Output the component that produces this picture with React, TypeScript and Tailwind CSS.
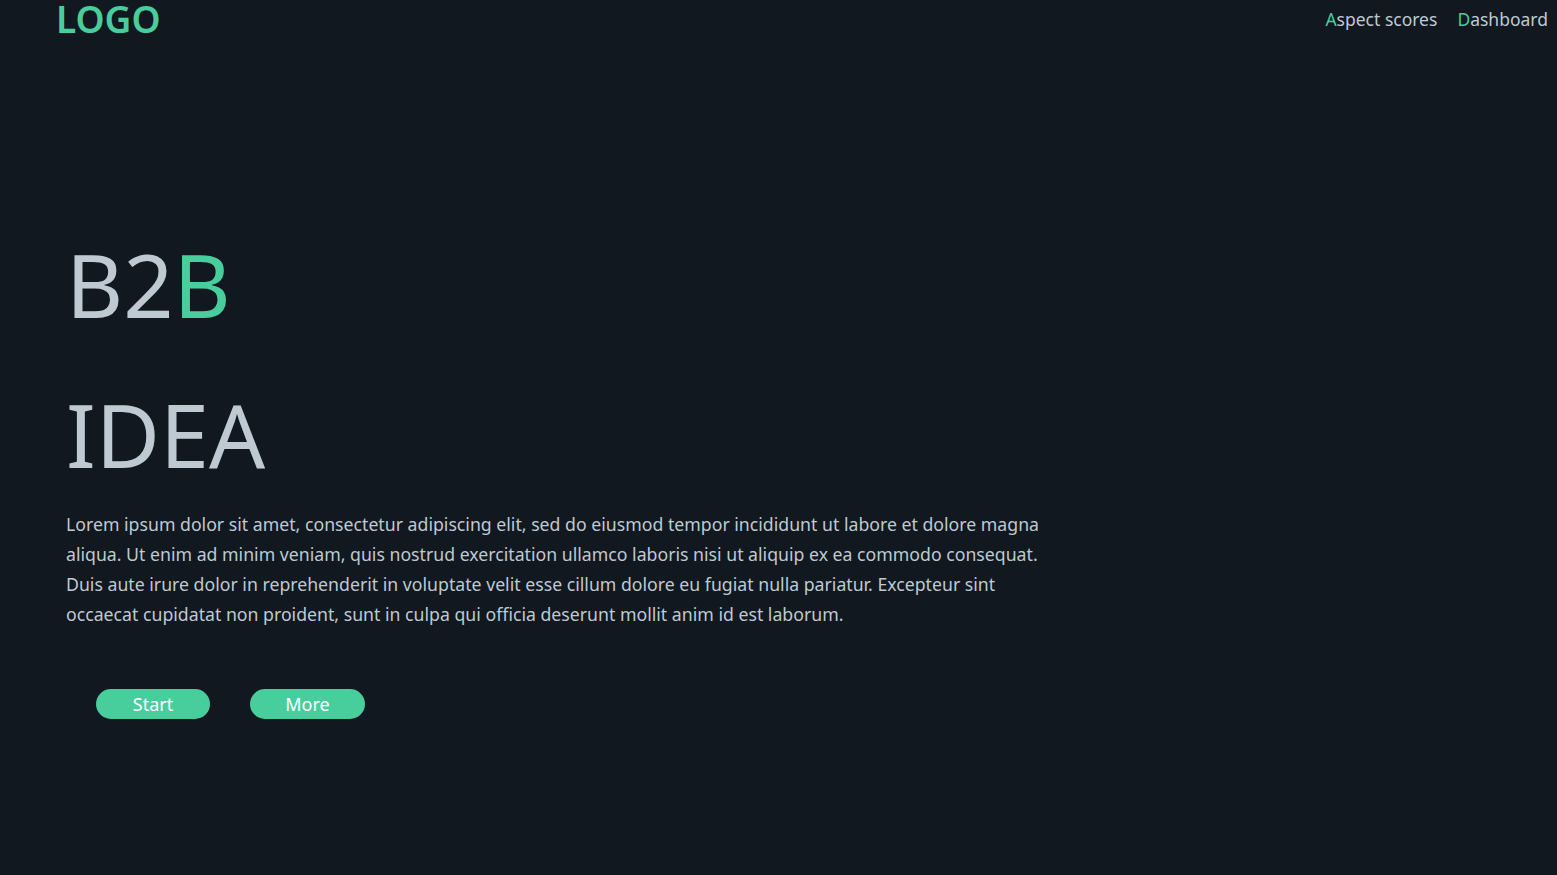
export default function App() {
  return (
    <main className="min-h-screen w-full bg-[#111820] text-[#bfc9d1] font-['Noto_Sans','Lato',sans-serif]">
      <header className="flex items-start justify-between pl-[56px] pr-[9px]">
        <div className="text-[37px] font-semibold leading-[38px] text-[#48cd9d]">LOGO</div>
        <nav className="flex gap-[20px] pt-[6px] text-[17.5px] leading-[26px]">
          <a href="#" className="hover:text-white">
            <span className="text-[#48cd9d]">A</span>spect scores
          </a>
          <a href="#" className="hover:text-white">
            <span className="text-[#48cd9d]">D</span>ashboard
          </a>
        </nav>
      </header>

      <section className="pl-[66px] pt-[171px]">
        <h1 className="text-[88px] font-normal leading-[150px]">
          <div>
            B2<span className="text-[#48cd9d]">B</span>
          </div>
          <div>IDEA</div>
        </h1>
        <p className="w-[990px] text-[17.7px] leading-[30px]">
          Lorem ipsum dolor sit amet, consectetur adipiscing elit, sed do eiusmod tempor incididunt ut labore et dolore magna aliqua. Ut enim ad minim veniam, quis nostrud exercitation ullamco laboris nisi ut aliquip ex ea commodo consequat. Duis aute irure dolor in reprehenderit in voluptate velit esse cillum dolore eu fugiat nulla pariatur. Excepteur sint occaecat cupidatat non proident, sunt in culpa qui officia deserunt mollit anim id est laborum.
        </p>
        <div className="mt-[60px] flex gap-[40px] pl-[30px]">
          <button className="h-[30px] w-[114px] rounded-full bg-[#48cd9d] text-[18px] leading-[30px] text-white">Start</button>
          <button className="h-[30px] w-[115px] rounded-full bg-[#48cd9d] text-[18px] leading-[30px] text-white">More</button>
        </div>
      </section>
    </main>
  );
}
